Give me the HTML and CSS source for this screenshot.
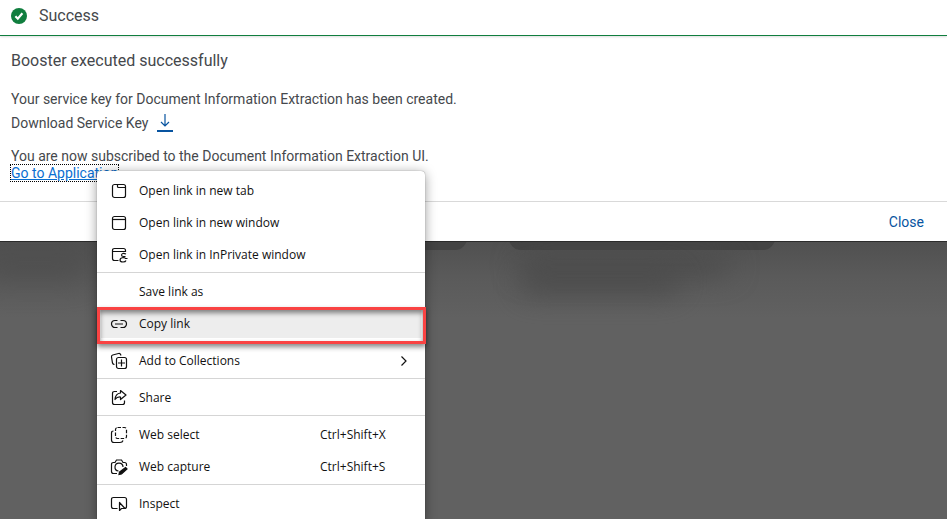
FILE: index.html
```html
<!DOCTYPE html>
<html lang="en">
<head>
<meta charset="utf-8">
<title>Success</title>
<link rel="stylesheet" href="styles.css">
</head>
<body>
<main class="page">
  <section class="dialog" role="dialog" aria-labelledby="dialog-title">
    <header class="dialog-header">
      <svg class="status" viewBox="0 0 16 16" aria-hidden="true"><circle cx="8" cy="8" r="8" fill="#107e3e"/><path d="M4.4 8.300l2.400 2.400 4.600-5.400" fill="none" stroke="#fff" stroke-width="2.200"/></svg>
      <h1 class="dialog-title" id="dialog-title">Success</h1>
    </header>
    <div class="dialog-body">
      <h2 class="headline">Booster executed successfully</h2>
      <p class="text">Your service key for Document Information Extraction has been created.</p>
      <p class="text download">Download Service Key
        <a class="download-link" href="#" aria-label="Download service key"><svg width="16" height="16" viewBox="0 0 16 16" aria-hidden="true"><path d="M8 0v11.500M4 8l4 4 4-4" fill="none" stroke="#0854a0" stroke-width="1.200"/></svg></a>
      </p>
      <p class="text">You are now subscribed to the Document Information Extraction UI.</p>
      <a class="app-link" href="#">Go to Application</a>
    </div>
    <footer class="dialog-footer"><button class="close" type="button">Close</button></footer>
  </section>
  <div class="backdrop" aria-hidden="true">
    <span class="card card-left"></span><span class="card card-right"></span>
    <span class="smudge smudge-left"></span><span class="smudge smudge-wide"></span><span class="smudge smudge-low"></span>
  </div>

  <div class="menu" role="menu">
    <button class="item" role="menuitem"><svg class="icon" viewBox="0 0 18 18"><rect x="2.500" y="2.500" width="13" height="13" rx="2"/><path d="M7.500 2.500v2q0 1 1 1h7"/></svg><span>Open link in new tab</span></button>
    <button class="item" role="menuitem"><svg class="icon" viewBox="0 0 18 18"><rect x="2.500" y="2.500" width="13" height="13" rx="2"/><path d="M2.500 5.500h13"/></svg><span>Open link in new window</span></button>
    <button class="item" role="menuitem"><svg class="icon" viewBox="0 0 18 18"><path d="M8.500 14.500h-4q-2 0-2-2v-8q0-2 2-2h9q2 0 2 2V6M2.500 5.500h13M16 8q-4-1.500-4.500 1 0 1.500 2 1.500h2M17.500 12.500h-2q-.5-1-2.500-1-3 .5-3 2.500t3 2q2.500 0 3-1.500"/></svg><span>Open link in InPrivate window</span></button>
    <hr class="rule">
    <button class="item" role="menuitem"><span class="icon"></span><span>Save link as</span></button>
    <button class="item selected" role="menuitem"><svg class="icon" viewBox="0 0 18 18"><path d="M7.500 5.500H5a3.500 3.500 0 0 0 0 7h2.500M10.500 5.500H13a3.500 3.500 0 0 1 0 7h-2.500M5 9h8"/></svg><span>Copy link</span></button>
    <hr class="rule">
    <button class="item" role="menuitem"><svg class="icon" viewBox="0 0 18 18"><path d="M4.500 12.500q-1.500 0-2-1.500L1.500 5q-.3-1.600 1.200-2L8.500 1.500q1.700-.4 2.200 1.300l.3.700"/><rect x="6.500" y="5.500" width="10" height="11" rx="2"/><path d="M11.500 7.500v7M8 11h7"/></svg><span>Add to Collections</span><svg class="chevron" viewBox="0 0 8 12" aria-hidden="true"><path d="M1.500 1.500L6 6l-4.500 4.500"/></svg></button>
    <hr class="rule">
    <button class="item" role="menuitem"><svg class="icon" viewBox="0 0 18 18"><path d="M7 2.500H4.500q-2 0-2 2v9q0 2 2 2h8q2 0 2-2v-2M10.500 1.500L16 6l-5.500 4.500V8Q7 7.700 5 10.500 5.500 4.500 10.500 4z" stroke-linejoin="round"/></svg><span>Share</span></button>
    <hr class="rule">
    <button class="item" role="menuitem"><svg class="icon" viewBox="0 0 18 18"><rect x="5.500" y="1.500" width="11" height="11" rx="2" stroke-dasharray="3.500 1.500"/><path d="M3.500 5q-2 0-2 2v7q0 2.500 2.500 2.500h6q2.500 0 3-2"/></svg><span>Web select</span><kbd class="keys">Ctrl+Shift+X</kbd></button>
    <button class="item" role="menuitem"><svg class="icon" viewBox="0 0 18 18"><path d="M7 15.500H3.500q-2 0-2-2v-7q0-2 2-2H5L6.500 2h5L13 4.500h1.500q2 0 2 2V8M8.500 13a4 4 0 1 1 4.500-4"/><path d="M15.500 9.500l1.500 1.500-5.500 5-2.500.500.500-2.500z" fill="#111"/></svg><span>Web capture</span><kbd class="keys">Ctrl+Shift+S</kbd></button>
    <hr class="rule">
    <button class="item" role="menuitem"><svg class="icon" viewBox="0 0 18 18"><path d="M7.500 13.500h-4q-2 0-2-2v-7q0-2 2-2h11q2 0 2 2v7q0 2-2 2"/><path d="M9.500 7.500v8l2-2h3.500z" stroke-linejoin="round"/></svg><span>Inspect</span></button>
  </div>
</main>
</body>
</html>
```

FILE: styles.css
```css
* { box-sizing: border-box; }
body { margin: 0; background: #616161; color: #45484c; font: 14px/18px Roboto, "Liberation Sans", sans-serif; }
h1, h2, p { margin: 0; font-weight: 400; }
.page { position: relative; display: flex; flex-direction: column; height: 100vh; overflow: hidden; }
.dialog { background: #fff; border-bottom: 1px solid #2b2b2b; }
.dialog-header { display: flex; align-items: center; gap: 12px; height: 36px; padding: 0 11px 4px; border-bottom: 1px solid #107e3e; box-shadow: 0 1px 2px #ddd; }
.status { width: 16px; height: 16px; }
.dialog-title, .headline { font-size: 16px; line-height: 20px; }
.dialog-body { display: flex; flex-direction: column; align-items: flex-start; padding: 15px 11px 20px; }
.headline { margin-bottom: 19px; }
.download { display: flex; align-items: center; gap: 9px; margin: 3px 0 12px; height: 24px; }
.download-link { display: flex; height: 18px; border-bottom: 2px solid #0854a0; }
.app-link { height: 16px; line-height: 16px; color: #0a6ed1; outline: 1px dotted #000; text-decoration: underline; }
.dialog-footer { display: flex; justify-content: flex-end; padding: 0 16px; border-top: 1px solid #d9d9d9; }
.close { height: 39px; padding: 0 7px; border: 0; background: none; color: #0854a0; font: inherit; }
.backdrop { position: relative; flex: 1; overflow: hidden; background: linear-gradient(#505050, #5a5a5a 34px, #616161 76px); }
.card, .smudge { position: absolute; }
.card { top: -16px; height: 24px; background: #444; border-radius: 16px; }
.card-left { left: 180px; width: 287px; }
.card-right { left: 509px; width: 266px; }
.smudge { background: #494949; filter: blur(14px); border-radius: 20px; }
.smudge-left { left: -20px; top: 10px; width: 110px; height: 30px; opacity: .6; }
.smudge-wide { left: 520px; top: 14px; width: 210px; height: 18px; }
.smudge-low { left: 520px; top: 28px; width: 160px; height: 24px; opacity: .8; }
.menu { position: absolute; left: 97px; top: 171px; width: 328px; padding: 3px 0; border-radius: 4px 4px 0 0; background: #fff; box-shadow: 0 2px 12px #0006, 0 0 1px #0008; color: #111; }
.item { display: flex; align-items: center; gap: 11px; width: 100%; height: 32px; padding: 2px 13px 0; border: 0; background: none; color: inherit; font: 12px/16px "Open Sans", sans-serif; text-align: left; }
.icon { flex: none; width: 18px; height: 18px; }
.icon, .chevron { fill: none; stroke: #111; stroke-width: 1.2; }
.chevron { width: 8px; height: 12px; margin: 0 4px 0 auto; }
.keys { width: 92px; margin-left: auto; font: inherit; }
.rule { height: 1px; margin: 2px 0; border: 0; background: #d5d5d5; }
.selected { position: relative; background: #ededed; background-clip: content-box; padding: 3px 4px 1px; }
.selected .icon { margin-left: 9px; }
.selected::after { content: ""; position: absolute; inset: 0 -1px -5px 0; border: 3px solid #f94343; box-shadow: 0 3px 5px #0007, inset 0 3px 5px #0007; }
```
